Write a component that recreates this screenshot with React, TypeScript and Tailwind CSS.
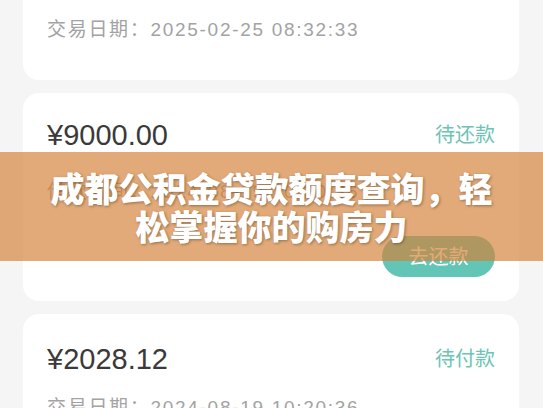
import React from 'react';

const font = "font-['Liberation_Sans','Noto_Sans_CJK_SC',sans-serif]";

const DateLine = ({ label, value }: { label: string; value: string }) => (
  <div className="h-[38px] flex items-center text-[19px] text-[#a3a3a3] tracking-[1.7px] whitespace-nowrap">
    {label}：{value}
  </div>
);

const AmountRow = ({ amount, status }: { amount: string; status: string }) => (
  <div className="h-[36px] flex items-center justify-between">
    <span className="text-[29px] text-[#3a3a3a] leading-none">{amount}</span>
    <span className="text-[20px] text-[#6cc4b3]">{status}</span>
  </div>
);

export default function App() {
  return (
    <div className={`relative w-[543px] h-[408px] overflow-hidden bg-[#f5f5f5] ${font}`}>
      <div className="flex flex-col gap-[13px] pl-[23px] w-[519px]">
        {/* card cut off at the top */}
        <div className="h-[80px] bg-white rounded-b-[16px] px-[24px] pt-[11px]">
          <DateLine label="交易日期" value="2025-02-25 08:32:33" />
        </div>

        <div className="bg-white rounded-[16px] px-[24px] pt-[24px] pb-[24px]">
          <AmountRow amount="¥9000.00" status="待还款" />
          <div className="mt-[20px]">
            <DateLine label="借款时间" value="2024-08-19 10:20:36" />
          </div>
          <div className="mt-[25px] flex justify-end">
            <button className="w-[113px] h-[41px] rounded-full bg-[#62c5b6] text-white text-[20px]">
              去还款
            </button>
          </div>
        </div>

        <div className="bg-white rounded-[16px] px-[24px] pt-[27px] h-[140px]">
          <AmountRow amount="¥2028.12" status="待付款" />
          <div className="mt-[12px]">
            <DateLine label="交易日期" value="2024-08-19 10:20:36" />
          </div>
        </div>
      </div>

      {/* title banner over the list */}
      <div className="absolute left-0 right-0 top-[152px] h-[109px] bg-[rgba(212,130,56,0.68)] flex items-center justify-center">
        <h1 className="w-[450px] text-center text-white text-[34px] leading-[38px] font-black font-['Noto_Sans_CJK_SC',sans-serif] [text-shadow:1px_1px_3px_rgba(0,0,0,0.35)]">
          成都公积金贷款额度查询，轻松掌握你的购房力
        </h1>
      </div>
    </div>
  );
}
